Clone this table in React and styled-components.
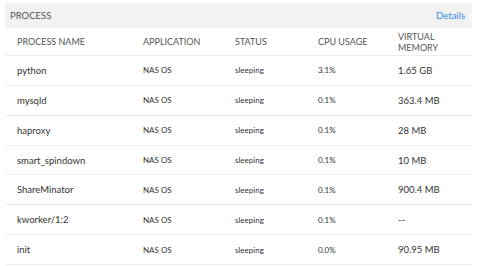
import React from 'react';
import styled, { createGlobalStyle } from 'styled-components';

const GlobalStyle = createGlobalStyle`
  html, body {
    margin: 0;
    padding: 0;
    background: #ffffff;
  }
  body {
    font-family: Lato, "Open Sans", "Liberation Sans", sans-serif;
    color: #333;
  }
`;

const Panel = styled.div`
  width: 467px;
  padding: 3px 0 0 5px;
`;

const PanelHeader = styled.div`
  display: flex;
  align-items: center;
  justify-content: space-between;
  height: 25px;
  padding: 0 7px 0 5px;
  background: #f2f2f2;
`;

const PanelTitle = styled.span`
  font-size: 9.5px;
  color: #555;
`;

const DetailsLink = styled.a`
  font-size: 9.5px;
  color: #2d8ee6;
  text-decoration: none;
  cursor: pointer;
`;

const Table = styled.div`
  display: flex;
  flex-direction: column;
`;

const Row = styled.div`
  box-sizing: border-box;
  display: grid;
  grid-template-columns: 126px 92px 83px 80px 86px;
  align-items: center;
  height: ${p => (p.head ? 28 : 29.86)}px;
  border-bottom: 1px solid #ececec;
`;

const HeadCell = styled.div`
  padding-left: 12px;
  font-size: 9px;
  line-height: 11px;
  color: #555;
  text-transform: uppercase;
`;

const Cell = styled.div`
  padding-left: 12px;
  font-size: ${p => (p.small ? 8 : 9.5)}px;
  color: #333;
  white-space: nowrap;
`;

const columns = ['Process Name', 'Application', 'Status', 'CPU Usage', 'Virtual Memory'];

const processes = [
  { name: 'python', app: 'NAS OS', status: 'sleeping', cpu: '3.1%', mem: '1.65 GB' },
  { name: 'mysqld', app: 'NAS OS', status: 'sleeping', cpu: '0.1%', mem: '363.4 MB' },
  { name: 'haproxy', app: 'NAS OS', status: 'sleeping', cpu: '0.1%', mem: '28 MB' },
  { name: 'smart_spindown', app: 'NAS OS', status: 'sleeping', cpu: '0.1%', mem: '10 MB' },
  { name: 'ShareMinator', app: 'NAS OS', status: 'sleeping', cpu: '0.1%', mem: '900.4 MB' },
  { name: 'kworker/1:2', app: 'NAS OS', status: 'sleeping', cpu: '0.1%', mem: '--' },
  { name: 'init', app: 'NAS OS', status: 'sleeping', cpu: '0.0%', mem: '90.95 MB' },
];

const App = () => (
  <>
    <GlobalStyle />
    <Panel>
      <PanelHeader>
        <PanelTitle>PROCESS</PanelTitle>
        <DetailsLink>Details</DetailsLink>
      </PanelHeader>
      <Table>
        <Row head>
          {columns.map(c => (
            <HeadCell key={c}>{c}</HeadCell>
          ))}
        </Row>
        {processes.map(p => (
          <Row key={p.name}>
            <Cell>{p.name}</Cell>
            <Cell small>{p.app}</Cell>
            <Cell small>{p.status}</Cell>
            <Cell small>{p.cpu}</Cell>
            <Cell>{p.mem}</Cell>
          </Row>
        ))}
      </Table>
    </Panel>
  </>
);

export default App;
